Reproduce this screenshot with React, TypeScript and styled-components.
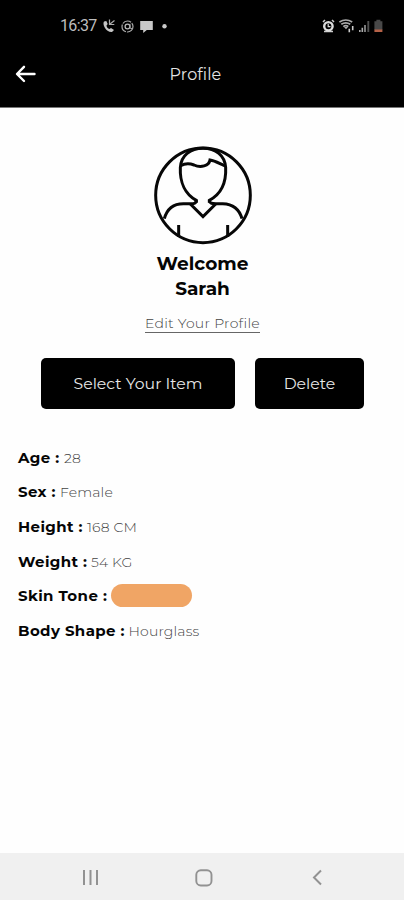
import React from "react";
import styled, { createGlobalStyle } from "styled-components";

const GlobalStyle = createGlobalStyle`
  * { box-sizing: border-box; }
  body { margin: 0; background: #fff; font-family: Montserrat, Inter, sans-serif; }
  button { font: inherit; border: 0; padding: 0; background: none; }
  svg { display: block; flex: none; }
`;

const Screen = styled.div`
  width: 404px;
  height: 900px;
  display: flex;
  flex-direction: column;
  background: #fefefe;
  color: #050505;
`;

const TopArea = styled.header`
  height: 108px;
  background: #000;
  border-bottom: 1px solid #777;
`;

const StatusBar = styled.div`
  height: 50px;
  padding: 2px 20px 0 60px;
  display: flex;
  align-items: center;
  justify-content: space-between;
`;

const StatusGroup = styled.div`
  display: flex;
  align-items: center;
`;

const Clock = styled.span`
  width: 42px;
  color: #bdbdbd;
  font: 400 16px/20px Roboto, sans-serif;
  letter-spacing: -0.65px;
`;

const TitleBar = styled.div`
  height: 48px;
  display: grid;
  grid-template-columns: 50px 1fr 63px;
  align-items: center;
`;

const BackButton = styled.button`
  padding-left: 15px;
`;

const Title = styled.h1`
  margin: 1px 0 0;
  color: #e4e4e4;
  text-align: center;
  font-size: 16px;
  font-weight: 400;
  line-height: 20px;
  letter-spacing: 0.1px;
`;

const Content = styled.main`
  flex: 1;
  display: flex;
  flex-direction: column;
`;

const Hero = styled.section`
  height: 250px;
  padding: 31px 0 0;
  display: flex;
  flex-direction: column;
  align-items: center;
`;

const Greeting = styled.h2`
  margin: 0;
  padding-left: 1px;
  font-size: 18.5px;
  font-weight: 700;
  line-height: 25px;
`;

const EditLink = styled.a`
  height: 18px;
  margin: 14px 0 0 1px;
  color: #444;
  font-size: 14px;
  font-weight: 300;
  line-height: 17px;
  letter-spacing: 0.27px;
  border-bottom: 1px solid #666;
`;

const Actions = styled.div`
  display: flex;
  gap: 20px;
  padding-left: 41px;
`;

const ActionButton = styled.button<{ $width: number }>`
  width: ${(p) => p.$width}px;
  height: 51px;
  border-radius: 5px;
  background: #000;
  color: #e8e8e8;
  font-size: 15.7px;
  line-height: 20px;
`;

const Details = styled.dl`
  margin: 31.5px 0 0;
  padding-left: 18px;
`;

const Detail = styled.div`
  height: 34.6px;
  display: flex;
  align-items: center;
`;

const Label = styled.dt<{ $width: number }>`
  width: ${(p) => p.$width}px;
  white-space: nowrap;
  font-size: 15px;
  font-weight: 700;
  line-height: 20px;
  letter-spacing: 0.4px;
`;

const Value = styled.dd`
  margin: 0;
  color: #444;
  font-size: 14px;
  font-weight: 300;
  line-height: 20px;
  letter-spacing: 0.15px;
`;

const ToneSwatch = styled.dd`
  width: 81px;
  height: 23px;
  margin: 0 0 2px;
  border-radius: 12px;
  background: #f0a565;
`;

const NavBar = styled.nav`
  height: 47px;
  display: grid;
  grid-template-columns: 113px 117px 12px;
  align-items: center;
  padding: 2px 0 0 82px;
  background: #f0f0f0;
`;

const details = [
  { label: "Age :", width: 46, value: "28" },
  { label: "Sex :", width: 42, value: "Female" },
  { label: "Height :", width: 69, value: "168 CM" },
  { label: "Weight :", width: 73, value: "54 KG" },
  { label: "Skin Tone :", width: 93, value: null },
  { label: "Body Shape :", width: 110.5, value: "Hourglass" },
];

const StatusIconsLeft = () => (
  <svg width="68" height="20" viewBox="102 15 68 20" fill="none">
    <path d="M104 20.5c-2 3 2 11 8 10.5l2-2-3-2-1.5 1c-1.8-.6-2.8-2-3-3.6l1.2-1.4-1.4-3z" fill="#c4c4c4" />
    <path d="M109.5 18.5v5h4.8M110 23l4.5-3.5" stroke="#aaa" strokeWidth="1.2" />
    <circle cx="127.5" cy="25.5" r="5.5" stroke="#aaa" strokeWidth="1.2" strokeDasharray="9 1" />
    <circle cx="127.5" cy="25.5" r="2.4" stroke="#b8b8b8" strokeWidth="1.3" />
    <path d="M130 22.8v3.4q0 2 2.2 1.2" stroke="#aaa" />
    <path d="M140.2 20h12.6v9h-6l-3.6 3v-3h-3z" fill="#c8c8c8" />
    <circle cx="164.5" cy="25.3" r="2.2" fill="#c9c9c9" />
  </svg>
);

const StatusIconsRight = () => (
  <svg width="64" height="20" viewBox="320 15 64 20" fill="none">
    <path d="M323 21l2-2M334 21l-2-2M324 30.5h9" stroke="#ccc" strokeWidth="1.5" />
    <circle cx="328.4" cy="25.3" r="4.2" stroke="#ddd" strokeWidth="2.4" />
    <path d="M328.2 22.7v3h2.3" stroke="#ddd" strokeWidth="1.2" />
    <path d="M339.4 21q6.4-4 12.8 0M341.3 23.3q4.5-3 9 0M343.3 25.6q2.5-2 5 0" stroke="#aaa" strokeWidth="1.7" />
    <path d="M344 26l2 2.2 2-2.2z" fill="#aaa" />
    <path d="M349.3 27.7v3.5M352.7 25v4.3" stroke="#ccc" strokeWidth="1.6" />
    <path d="M359.8 31v-2M362.3 31v-4.3" stroke="#aaa" strokeWidth="1.6" />
    <path d="M365 31v-7" stroke="#888" strokeWidth="1.8" />
    <path d="M368.3 31V20" stroke="#505050" strokeWidth="1.9" />
    <path d="M376.4 18.7h4v1.5h2V29h-8v-8.8h2z" fill="#484848" />
    <path d="M374.4 28.5h8V31h-8z" fill="#b66248" />
  </svg>
);

const Avatar = () => (
  <svg width="124" height="112" viewBox="0 2 372 336" fill="none" stroke="#070707" strokeWidth="9">
    <circle cx="189" cy="171" r="142" />
    <path d="M169 193v-7C136 168 119 132 121 88C123 51 151 30 189 30S255 51 257 88C259 132 244 167 208 186v7" />
    <path d="M122 82C139 73 151 76 162 80C182 89 207 83 210 65C225 67 235 74 255 83" />
    <path d="M73 241C81 211 101 196 130 196H149C160 197 169 196 169 186M208 186C209 197 218 196 232 196H248C278 197 298 212 306 241" />
    <path d="M151 197l38 38 38-38" />
    <path d="M116 260v36M263 260v36" />
  </svg>
);

export default function App() {
  return (
    <Screen>
      <GlobalStyle />
      <TopArea>
        <StatusBar>
          <StatusGroup><Clock>16:37</Clock><StatusIconsLeft /></StatusGroup>
          <StatusIconsRight />
        </StatusBar>
        <TitleBar>
          <BackButton aria-label="Back">
            <svg width="22" height="20" viewBox="0 0 22 20" fill="none" stroke="#fff" strokeWidth="2.4" strokeLinecap="round" strokeLinejoin="round">
              <path d="M19.5 10H2.5M9 2.8L2 10l7 7" />
            </svg>
          </BackButton>
          <Title>Profile</Title>
        </TitleBar>
      </TopArea>
      <Content>
        <Hero>
          <Avatar />
          <Greeting>Welcome</Greeting>
          <Greeting>Sarah</Greeting>
          <EditLink>Edit Your Profile</EditLink>
        </Hero>
        <Actions>
          <ActionButton $width={194}>Select Your Item</ActionButton>
          <ActionButton $width={109}>Delete</ActionButton>
        </Actions>
        <Details>
          {details.map((d) => (
            <Detail key={d.label}>
              <Label $width={d.width}>{d.label}</Label>
              {d.value ? <Value>{d.value}</Value> : <ToneSwatch />}
            </Detail>
          ))}
        </Details>
      </Content>
      <NavBar>
        <svg width="17" height="17" viewBox="0 0 17 17" stroke="#929292" strokeWidth="2">
          <path d="M2 1v15M8.5 1v15M15 1v15" />
        </svg>
        <svg width="18" height="18" viewBox="0 0 18 18" fill="none" stroke="#929292" strokeWidth="1.9">
          <rect x="1.3" y="1.3" width="15.2" height="15.2" rx="4.5" />
        </svg>
        <svg width="12" height="17" viewBox="0 0 12 17" fill="none" stroke="#929292" strokeWidth="2">
          <path d="M9 1.5L2 8.5l7 7" />
        </svg>
      </NavBar>
    </Screen>
  );
}
